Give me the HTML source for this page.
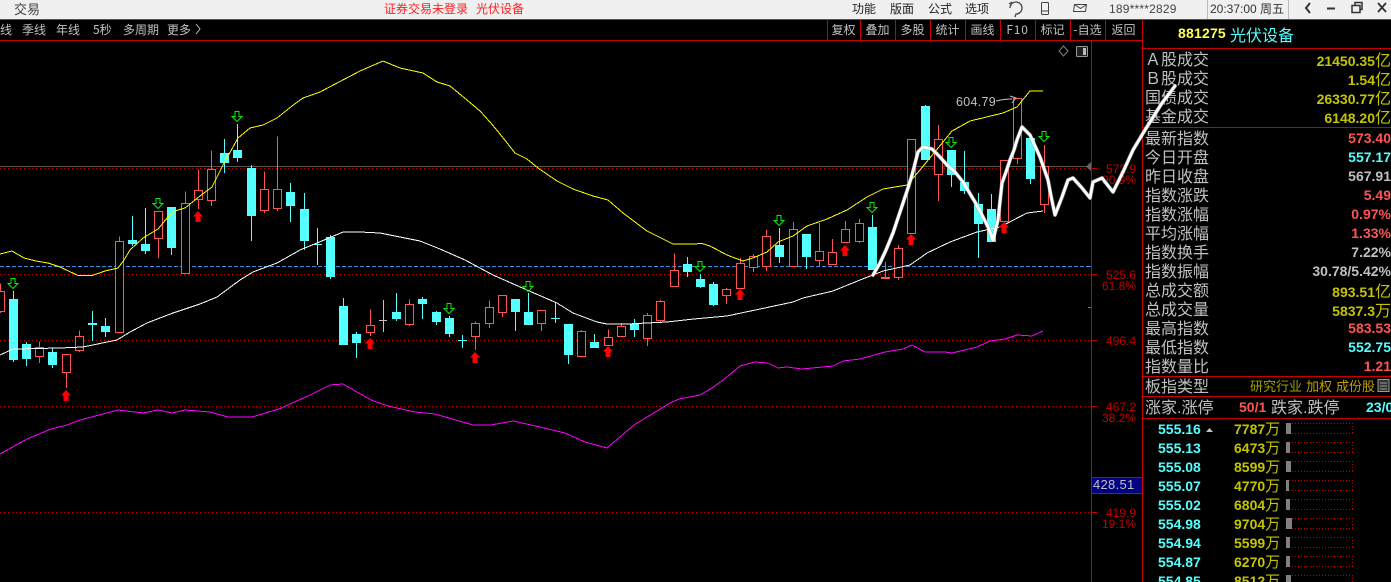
<!DOCTYPE html>
<html><head><meta charset="utf-8"><style>
*{margin:0;padding:0;box-sizing:border-box}
html,body{width:1391px;height:582px;overflow:hidden;background:#000}
body{position:relative;font-family:"Liberation Sans","WenQuanYi Zen Hei","Noto Sans CJK SC",sans-serif}
.t{position:absolute;white-space:nowrap;line-height:20px;height:20px}
.c{font-family:"WenQuanYi Zen Hei","Noto Sans CJK SC",sans-serif}
.l{left:1145px;font-size:16px;color:#c0c0c0;font-family:"Liberation Sans","WenQuanYi Zen Hei","Noto Sans CJK SC",sans-serif}
.v{right:0;font-size:14px;font-weight:bold;text-align:right}
.v i{font-style:normal;font-weight:normal;font-size:16px;font-family:"WenQuanYi Zen Hei","Noto Sans CJK SC",sans-serif}
.y{color:#c4c400}.r{color:#ff5454}.q{color:#54ffff}.g{color:#c0c0c0}
.tb{font-size:12px;color:#c0c0c0;top:20px}
.btn{top:20px;font-size:12px;color:#c0c0c0;text-align:center;font-family:"WenQuanYi Zen Hei","Noto Sans CJK SC",sans-serif}
.top{top:-1px;font-size:12px;color:#222}
.ax{font-size:12px;color:#c00000;text-align:right;right:255px}
.p{left:1158px;font-size:14px;font-weight:bold;color:#54ffff}
.o{left:1234px;font-size:14px;font-weight:bold;color:#c4c400}
.o i{font-style:normal;font-weight:normal;font-size:15px;font-family:"WenQuanYi Zen Hei","Noto Sans CJK SC",sans-serif}
.bx{position:absolute;left:1286px;width:67px;height:11px;background:repeating-linear-gradient(90deg,#c00000 0 1px,transparent 1px 3px) 0 0/100% 1px no-repeat,repeating-linear-gradient(90deg,#c00000 0 1px,transparent 1px 3px) 0 100%/100% 1px no-repeat,repeating-linear-gradient(180deg,#c00000 0 1px,transparent 1px 3px) 100% 0/1px 100% no-repeat}
.bb{position:absolute;left:1286px;height:11px;background:#808080}
.hl{position:absolute;background:#c80000}
.dot{position:absolute;left:0;width:1091px;height:1px;background:repeating-linear-gradient(90deg,#c00000 0 1px,transparent 1px 4px)}
</style></head><body>
<div style="position:absolute;left:0;top:0;width:1391px;height:19px;background:#f0f0f0"></div>
<div style="position:absolute;left:0;top:19px;width:1391px;height:1px;background:#555"></div>
<div class="t top c" style="left:14px;font-size:13px;color:#444">交易</div>
<div class="t top c" style="left:384px;color:#ff2020">证券交易未登录</div>
<div class="t top c" style="left:476px;color:#ff2020">光伏设备</div>
<div class="t top c" style="left:852px">功能</div>
<div class="t top c" style="left:890px">版面</div>
<div class="t top c" style="left:928px">公式</div>
<div class="t top c" style="left:965px">选项</div>
<div class="t top" style="left:1109px;color:#444;letter-spacing:.2px">189****2829</div>
<div style="position:absolute;left:1207px;top:0;width:82px;height:19px;border-left:1px solid #bbb;border-right:1px solid #bbb"></div>
<div class="t top" style="left:1210px;color:#333">20:37:00 <span class="c">周五</span></div>

<div class="t tb c" style="left:0">线</div>
<div class="t tb c" style="left:22px">季线</div>
<div class="t tb c" style="left:56px">年线</div>
<div class="t tb c" style="left:93px">5秒</div>
<div class="t tb c" style="left:123px">多周期</div>
<div class="t tb c" style="left:167px">更多</div>

<div class="t btn" style="left:827px;width:33px">复权</div>
<div class="t btn" style="left:860px;width:35px">叠加</div>
<div class="t btn" style="left:895px;width:35px">多股</div>
<div class="t btn" style="left:930px;width:35px">统计</div>
<div class="t btn" style="left:965px;width:35px">画线</div>
<div class="t btn" style="left:1000px;width:35px;letter-spacing:.8px">F10</div>
<div class="t btn" style="left:1035px;width:35px">标记</div>
<div class="t btn" style="left:1070px;width:35px">-自选</div>
<div class="t btn" style="left:1105px;width:37px">返回</div>

<div class="t" style="left:1178px;top:23px;font-size:14px;font-weight:bold;color:#ffff54;letter-spacing:.2px">881275</div>
<div class="t c" style="left:1230px;top:24px;font-size:16px;color:#54ffff">光伏设备</div>

<div class="t l" style="top:51px">Ａ股成交</div><div class="t v y" style="top:49px">21450.35<i>亿</i></div>
<div class="t l" style="top:70px">Ｂ股成交</div><div class="t v y" style="top:68px">1.54<i>亿</i></div>
<div class="t l" style="top:89px">国债成交</div><div class="t v y" style="top:87px">26330.77<i>亿</i></div>
<div class="t l" style="top:108px">基金成交</div><div class="t v y" style="top:106px">6148.20<i>亿</i></div>
<div class="t l" style="top:130px">最新指数</div><div class="t v r" style="top:128px">573.40</div>
<div class="t l" style="top:149px">今日开盘</div><div class="t v q" style="top:147px">557.17</div>
<div class="t l" style="top:168px">昨日收盘</div><div class="t v g" style="top:166px">567.91</div>
<div class="t l" style="top:187px">指数涨跌</div><div class="t v r" style="top:185px">5.49</div>
<div class="t l" style="top:206px">指数涨幅</div><div class="t v r" style="top:204px">0.97%</div>
<div class="t l" style="top:225px">平均涨幅</div><div class="t v r" style="top:223px">1.33%</div>
<div class="t l" style="top:244px">指数换手</div><div class="t v g" style="top:242px">7.22%</div>
<div class="t l" style="top:263px">指数振幅</div><div class="t v g" style="top:261px">30.78/5.42%</div>
<div class="t l" style="top:282px">总成交额</div><div class="t v y" style="top:280px">893.51<i>亿</i></div>
<div class="t l" style="top:301px">总成交量</div><div class="t v y" style="top:299px">5837.3<i>万</i></div>
<div class="t l" style="top:320px">最高指数</div><div class="t v r" style="top:318px">583.53</div>
<div class="t l" style="top:339px">最低指数</div><div class="t v q" style="top:337px">552.75</div>
<div class="t l" style="top:358px">指数量比</div><div class="t v r" style="top:356px">1.21</div>
<div class="t l" style="top:378px">板指类型</div>
<div class="t c" style="left:1250px;top:376px;font-size:13px;color:#a0a000">研究行业</div>
<div class="t c" style="left:1306px;top:376px;font-size:13px;color:#c0a000">加权</div>
<div class="t c" style="left:1336px;top:376px;font-size:13px;color:#c0a000">成份股</div>
<div class="t l" style="top:399px">涨家.涨停</div>
<div class="t" style="left:1239px;top:397px;font-size:14px;font-weight:bold;color:#ff5454">50/1</div>
<div class="t l" style="left:1271px;top:399px">跌家.跌停</div>
<div class="t" style="left:1366px;top:397px;font-size:14px;font-weight:bold;color:#54ffff">23/0</div>

<div class="t p" style="top:419px">555.16</div><div class="t o" style="top:419px">7787<i>万</i></div><div class="bx" style="top:423px"></div><div class="bb" style="top:423px;width:5px"></div>
<div class="t p" style="top:438px">555.13</div><div class="t o" style="top:438px">6473<i>万</i></div><div class="bx" style="top:442px"></div><div class="bb" style="top:442px;width:4px"></div>
<div class="t p" style="top:457px">555.08</div><div class="t o" style="top:457px">8599<i>万</i></div><div class="bx" style="top:461px"></div><div class="bb" style="top:461px;width:5px"></div>
<div class="t p" style="top:476px">555.07</div><div class="t o" style="top:476px">4770<i>万</i></div><div class="bx" style="top:480px"></div><div class="bb" style="top:480px;width:3px"></div>
<div class="t p" style="top:495px">555.02</div><div class="t o" style="top:495px">6804<i>万</i></div><div class="bx" style="top:499px"></div><div class="bb" style="top:499px;width:4px"></div>
<div class="t p" style="top:514px">554.98</div><div class="t o" style="top:514px">9704<i>万</i></div><div class="bx" style="top:518px"></div><div class="bb" style="top:518px;width:6px"></div>
<div class="t p" style="top:533px">554.94</div><div class="t o" style="top:533px">5599<i>万</i></div><div class="bx" style="top:537px"></div><div class="bb" style="top:537px;width:4px"></div>
<div class="t p" style="top:552px">554.87</div><div class="t o" style="top:552px">6270<i>万</i></div><div class="bx" style="top:556px"></div><div class="bb" style="top:556px;width:4px"></div>
<div class="t p" style="top:571px">554.85</div><div class="t o" style="top:571px">8512<i>万</i></div><div class="bx" style="top:575px"></div><div class="bb" style="top:575px;width:5px"></div>

<div class="dot" style="top:168px"></div>
<div class="dot" style="top:274px"></div>
<div class="dot" style="top:340px"></div>
<div class="dot" style="top:406px"></div>
<div class="dot" style="top:512px"></div>
<div style="position:absolute;left:0;top:166px;width:1088px;height:1px;background:#555"></div>
<div style="position:absolute;left:0;top:266px;width:1091px;height:1px;background:repeating-linear-gradient(90deg,#3c8ce0 0 4px,transparent 4px 6px)"></div>

<div class="hl" style="left:0;top:40px;width:1142px;height:1px"></div>
<div class="hl" style="left:1142px;top:20px;width:1px;height:562px"></div>
<div class="hl" style="left:1091px;top:41px;width:1px;height:541px"></div>
<div class="hl" style="left:1142px;top:48px;width:249px;height:1px"></div>
<div class="hl" style="left:1142px;top:127px;width:249px;height:1px"></div>
<div class="hl" style="left:1142px;top:376px;width:249px;height:1px"></div>
<div class="hl" style="left:1142px;top:396px;width:249px;height:1px"></div>
<div class="hl" style="left:1142px;top:418px;width:249px;height:1px"></div>
<div class="hl" style="left:827px;top:20px;width:1px;height:20px"></div>
<div class="hl" style="left:860px;top:20px;width:1px;height:20px"></div>
<div class="hl" style="left:895px;top:20px;width:1px;height:20px"></div>
<div class="hl" style="left:930px;top:20px;width:1px;height:20px"></div>
<div class="hl" style="left:965px;top:20px;width:1px;height:20px"></div>
<div class="hl" style="left:1000px;top:20px;width:1px;height:20px"></div>
<div class="hl" style="left:1035px;top:20px;width:1px;height:20px"></div>
<div class="hl" style="left:1070px;top:20px;width:1px;height:20px"></div>
<div class="hl" style="left:1105px;top:20px;width:1px;height:20px"></div>

<div class="t ax" style="top:159px">572.9</div>
<div class="t ax" style="top:170px">90.9%</div>
<div class="t ax" style="top:265px">525.6</div>
<div class="t ax" style="top:276px">61.8%</div>
<div class="t ax" style="top:331px">496.4</div>
<div class="t ax" style="top:397px">467.2</div>
<div class="t ax" style="top:408px">38.2%</div>
<div class="t ax" style="top:503px">419.9</div>
<div class="t ax" style="top:514px">19.1%</div>
<div style="position:absolute;left:1091px;top:477px;width:52px;height:17px;background:#000080;border:1px solid #c80000"></div>
<div class="t" style="left:1093px;top:475px;font-size:13px;color:#c0c0c0;letter-spacing:.3px">428.51</div>
<div class="t" style="left:956px;top:92px;font-size:12.5px;color:#c0c0c0;letter-spacing:.3px">604.79</div>

<svg width="1391" height="582" viewBox="0 0 1391 582" style="position:absolute;left:0;top:0" xmlns="http://www.w3.org/2000/svg">
<defs>
<path id="u" d="M0 0l5 5.500H2.500V11h-5V5.500H-5z" fill="#ff0000"/>
<path id="d" d="M-2 .5h4v5h3L0 10.500-5 5.500h3z" fill="none" stroke="#00f000" stroke-width="1"/>
</defs>
<g shape-rendering="crispEdges">
<path d="M1091 168.500h6M1091 274.500h6M1091 340.500h6M1091 406.500h6M1091 512.500h6" stroke="#c80000" fill="none"/>
<path d="M1088 266.500h3M1088 307.500h3" stroke="#3c8ce0" fill="none"/>
<path fill="#54ffff" d="M9 299h9V360h-9zM13 291h1V362h-1zM22 344h9V359h-9zM26 342h1V366h-1zM48 352h9V365h-9zM52 348h1V368h-1zM88 323h9V325h-9zM92 311h1V341h-1zM101 326h9V332h-9zM105 318h1V337h-1zM128 240h9V244h-9zM132 216h1V246h-1zM141 244h9V251h-9zM145 208h1V254h-1zM167 207h9V248h-9zM171 207h1V255h-1zM220 153h9V163h-9zM224 139h1V173h-1zM233 150h9V158h-9zM237 124h1V162h-1zM247 168h9V216h-9zM251 165h1V241h-1zM286 192h9V206h-9zM290 183h1V222h-1zM300 209h9V241h-9zM304 193h1V250h-1zM313 244h9V245h-9zM317 228h1V265h-1zM326 237h9V277h-9zM330 235h1V279h-1zM339 306h9V345h-9zM343 298h1V345h-1zM352 334h9V343h-9zM356 332h1V358h-1zM392 312h9V319h-9zM396 293h1V321h-1zM418 299h9V304h-9zM422 297h1V319h-1zM432 312h9V322h-9zM436 311h1V325h-1zM445 318h9V334h-9zM449 316h1V337h-1zM458 340h9V341h-9zM462 335h1V348h-1zM511 299h9V312h-9zM515 299h1V331h-1zM524 312h9V325h-9zM528 293h1V325h-1zM551 318h9V319h-9zM555 303h1V323h-1zM564 324h9V355h-9zM568 324h1V364h-1zM590 342h9V348h-9zM594 334h1V348h-1zM630 324h9V330h-9zM634 319h1V337h-1zM683 264h9V272h-9zM687 257h1V277h-1zM696 279h9V287h-9zM700 274h1V288h-1zM709 284h9V305h-9zM713 282h1V306h-1zM775 245h9V257h-9zM779 228h1V263h-1zM802 234h9V257h-9zM806 234h1V269h-1zM868 227h9V270h-9zM872 215h1V270h-1zM921 106h9V160h-9zM925 105h1V160h-1zM947 150h9V175h-9zM951 150h1V187h-1zM960 182h9V191h-9zM964 151h1V194h-1zM974 204h9V224h-9zM978 193h1V258h-1zM987 209h9V242h-9zM991 194h1V242h-1zM1026 138h9V179h-9zM1030 138h1V184h-1z"/>
<path fill="#c0c0c0" d="M379 320h8v1h-8zM383 300h1V332h-1z"/>
<path fill="#000" stroke="#fc5454" stroke-width="1" d="M-3.500 291.500h8V311.500h-8zM.5 283.500V291M.5 312V313M35.500 347.500h8V356.500h-8zM39.500 341.500V347M39.500 357V363M62.500 354.500h8V372.500h-8zM66.500 373V388M75.500 336.500h8V350.500h-8zM79.500 330.500V336M79.500 351V352M115.500 241.500h8V332.500h-8zM119.500 236.500V241M154.500 211.500h8V238.500h-8zM158.500 239V258M181.500 203.500h8V273.500h-8zM185.500 191.500V203M194.500 190.500h8V199.500h-8zM198.500 169.500V190M198.500 200V209M207.500 169.500h8V200.500h-8zM211.500 150.500V169M211.500 201V206M260.500 189.500h8V210.500h-8zM264.500 171.500V189M264.500 211V213M273.500 189.500h8V208.500h-8zM277.500 136.500V189M277.500 209V211M366.500 325.500h8V332.500h-8zM370.500 309.500V325M370.500 333V336M405.500 304.500h8V324.500h-8zM409.500 299.500V304M409.500 325V326M471.500 323.500h8V336.500h-8zM475.500 321.500V323M475.500 337V350M485.500 307.500h8V323.500h-8zM489.500 300.500V307M489.500 324V328M498.500 295.500h8V312.500h-8zM502.500 313V317M537.500 310.500h8V323.500h-8zM541.500 324V331M577.500 331.500h8V356.500h-8zM581.500 330V331M604.500 337.500h8V345.500h-8zM608.500 329.500V337M617.500 326.500h8V336.500h-8zM621.500 323V326M643.500 315.500h8V338.500h-8zM647.500 313V315M647.500 339V346M656.500 301.500h8V320.500h-8zM660.500 300V301M660.500 321V323M670.500 270.500h8V286.500h-8zM674.500 253.500V270M722.500 289.500h8V295.500h-8zM726.500 288V289M726.500 296V304M736.500 263.500h8V288.500h-8zM740.500 258V263M749.500 256.500h8V267.500h-8zM753.500 254V256M753.500 268V272M762.500 236.500h8V266.500h-8zM766.500 230V236M766.500 267V271M789.500 229.500h8V266.500h-8zM793.500 222V229M815.500 251.500h8V260.500h-8zM819.500 223V251M819.500 261V267M828.500 252.500h8V264.500h-8zM832.500 239V252M841.500 229.500h8V242.500h-8zM845.500 221V229M855.500 223.500h8V241.500h-8zM859.500 219V223M859.500 242V243M881.500 277.500h8V278.500h-8zM885.500 262V277M894.500 248.500h8V277.500h-8zM898.500 245V248M898.500 278V280M907.500 139.500h8V233.500h-8zM934.500 139.500h8V174.500h-8zM938.500 125V139M938.500 175V201M1000.500 160.500h8V221.500h-8zM1013.500 98.500h8V158.500h-8zM1017.500 159V164M1040.500 166.500h8V204.500h-8zM1044.500 145V166M1044.500 205V213"/>
<g fill="none" stroke-width="1">
<polyline stroke="#ffff00" points="0,254 12,251 24,258 36,261 48,263 60,267 78,275.500 92,275.500 105,271 118,268 124,260 130,250 143,238 158,229 168,217 175,211 185,208 200,196 212,187 223,165 238,138 250,128 263,125 277,118 292,106 303,98 320,92 360,71 383,61 400,68 423,73 437,82 450,86 467,100 480,111 490,122 500,134 515,153 527,159 538,168 557,181 573,189 593,196 608,200 623,213 647,231 673,244 693,244 702,243.500 710,246 727,255 743,261 753,258 767,252 778,242 793,236 807,226 827,219 847,210 867,197 883,189 907,185 920,170 952,131 970,121 1003,113 1017,107 1030,91 1043,91"/>
<polyline stroke="#ffffff" points="0,355 13,349 60,348 83,347 117,340 130,332 147,323 173,313 200,304 217,297 240,280 253,272 277,263 300,250 317,243 343,232 360,232 380,233 400,237 420,241 440,249 465,260 493,275 527,290 557,303 573,313 597,322 607,324 627,324 667,322 694,319 727,316 793,302 803,298 833,291 860,280 873,275 883,271 910,265 927,253 950,242 977,232 1000,227 1027,213 1043,211"/>
<polyline stroke="#ff00ff" points="0,454 27,439 51,429 67,425 80,420 118,410 143,413 158,410 172,413 185,410 210,412 228,417 252,417 279,409 308,396 330,385 343,384 371,400 388,406 415,412 435,414 473,425 491,425 513,421 540,427 565,433 585,442 607,448 634,425 670,403 679,399 690,397 700,395 712,388 723,380 740,366 755,362 768,363 778,368 787,367 802,369 812,368 833,366 843,361 860,359 885,352 903,349 912,345 925,352 945,352 952,353 977,347 990,341 1005,339 1017,335 1032,336 1043,331"/>
</g>
</g>
<use href="#u" x="66" y="390"/><use href="#u" x="198" y="211"/><use href="#u" x="370" y="338"/><use href="#u" x="475" y="352"/><use href="#u" x="608" y="346"/><use href="#u" x="740" y="289"/><use href="#u" x="845" y="245"/><use href="#u" x="911" y="234"/><use href="#u" x="1004" y="222"/>
<use href="#d" x="13" y="278"/><use href="#d" x="158" y="198"/><use href="#d" x="237" y="111"/><use href="#d" x="449" y="303"/><use href="#d" x="528" y="281"/><use href="#d" x="700" y="261"/><use href="#d" x="779" y="215"/><use href="#d" x="872" y="202"/><use href="#d" x="951" y="137"/><use href="#d" x="1044" y="131"/>
<path d="M996 101q8-2 16-2M1010 96l6 2-4 5" stroke="#c0c0c0" fill="none"/>
<path d="M1063.500 46l4.500 5-4.500 5-4.500-5z" fill="none" stroke="#808080"/>
<rect x="1076.500" y="46.500" width="11" height="10" rx="1" fill="#222" stroke="#999"/><rect x="1083" y="48" width="3" height="7" fill="#bbb"/>
<path d="M1091 162v9l-5-4.500z" fill="#666"/>
<path d="M196 24l4 5-4 5" fill="none" stroke="#c0c0c0"/>
<path d="M1378 379.500h11v12h-11zM1380 383h7M1380 386h7M1380 389h7" fill="#333" stroke="#999"/>
<path d="M1206 432l3.500-4 3.500 4z" fill="#c0c0c0"/>
<path d="M1010 8a6 6 0 1 1 6 6l-1 3M1012 2l-3 2" fill="none" stroke="#444" stroke-width="1.300"/>
<rect x="1041.500" y="2.500" width="7" height="12" rx="1" fill="none" stroke="#444"/><path d="M1042 11h6" stroke="#444"/>
<path d="M1074.500 4.500h12l-1 7h-12zM1074.500 4.500l6 4 6-4" fill="none" stroke="#444"/>
<path d="M1310 3l-4 5 4 5" fill="none" stroke="#333" stroke-width="2"/>
<path d="M1327 8.500h8" stroke="#333" stroke-width="2"/>
<path d="M1352 5.500h8v7h-8zM1355 5V2.500h7v7h-2" fill="none" stroke="#333" stroke-width="1.500"/>
<path d="M1378 3l8 9M1386 3l-8 9" stroke="#333" stroke-width="1.800"/>
<polyline fill="none" stroke="#999" stroke-width="4.200" stroke-linejoin="round" stroke-linecap="round" opacity=".6" points="873,275 880,263 886,250 893,233 898,218 903,203 908,188 912,175 918,152 923,147 932,149 940,157 947,165 955,172 963,182 969,192 975,202 982,215 988,227 993,240 998,220 1002,183 1006,172 1010,160 1014,150 1017,140 1022,127 1030,135 1035,146 1040,157 1048,180 1051,196 1055,215 1062,197 1068,180 1073,178 1082,188 1090,198 1093,182 1102,178 1113,192 1123,172 1133,150 1145,130 1162,103 1175,86"/>
<polyline fill="none" stroke="#fff" stroke-width="3" stroke-linejoin="round" stroke-linecap="round" points="873,275 880,263 886,250 893,233 898,218 903,203 908,188 912,175 918,152 923,147 932,149 940,157 947,165 955,172 963,182 969,192 975,202 982,215 988,227 993,240 998,220 1002,183 1006,172 1010,160 1014,150 1017,140 1022,127 1030,135 1035,146 1040,157 1048,180 1051,196 1055,215 1062,197 1068,180 1073,178 1082,188 1090,198 1093,182 1102,178 1113,192 1123,172 1133,150 1145,130 1162,103 1175,86"/>
</svg>
</body></html>
